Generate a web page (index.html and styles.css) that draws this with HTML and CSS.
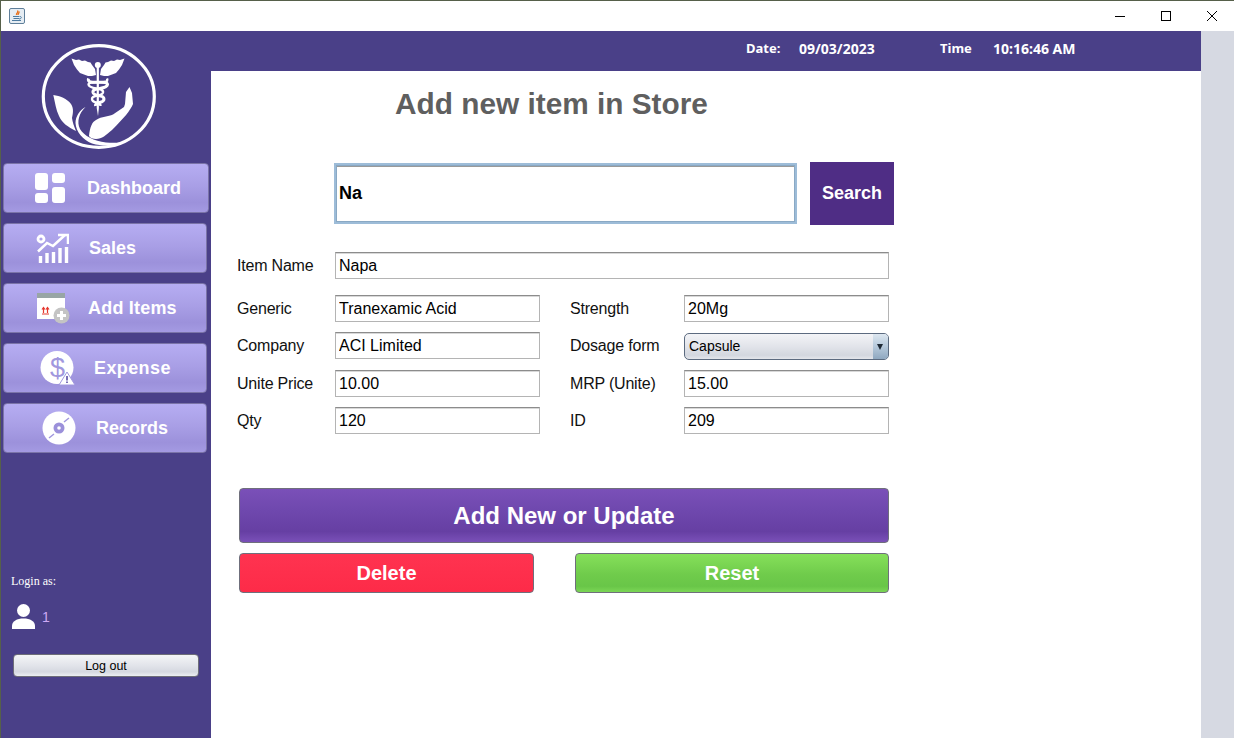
FILE: index.html
```html
<!DOCTYPE html>
<html lang="en">
<head>
<meta charset="utf-8">
<title>Add new item in Store</title>
<link rel="stylesheet" href="styles.css">
</head>
<body>
<div class="window">
  <div class="titlebar">
    <svg class="java-icon" viewBox="0 0 16 16">
      <rect x="0.5" y="0.5" width="15" height="15" rx="1.5" fill="#e6edf3" stroke="#5f7f9a"/>
      <path d="M8.5 2.5C10 4.500 7 5 7.500 7M10 3.500C10.500 5 9 5.500 9 7" fill="none" stroke="#e8701a" stroke-width="1.300"/>
      <path d="M4 8.500H10M4.500 10.500H10M3 12.500H12" stroke="#4d7ba0" stroke-width="1.100"/>
      <path d="M10.500 8.500C13 8 13 11 10 11" fill="none" stroke="#4d7ba0"/>
    </svg>
    <div class="window-buttons">
      <svg viewBox="0 0 12 12"><path d="M1 6.500H11" stroke="#000" fill="none"/></svg>
      <svg viewBox="0 0 12 12"><rect x="1.500" y="1.500" width="9" height="9" stroke="#000" fill="none"/></svg>
      <svg viewBox="0 0 12 12"><path d="M1 1L11 11M11 1L1 11" stroke="#000" fill="none"/></svg>
    </div>
  </div>

  <div class="frame">
    <div class="sidebar">
      <svg class="logo" viewBox="41 44 116 106">
        <ellipse cx="98.800" cy="96.500" rx="55.500" ry="50.800" fill="none" stroke="#fff" stroke-width="3.200"/>
        <g fill="#fff">
          <path d="M71.500 58.500L76 60L79 59.500L82 61L85 60.500L88 62L90.500 62.500L92 65L95 69L96 75L92 76L88 76L84 74.500L80 73L77 69.500L74 65z"/>
          <path d="M124.500 58.500L120 60L117 59.500L114 61L111 60.500L108 62L105.500 62.500L104 65L101 69L100 75L104 76L108 76L112 74.500L116 73L119 69.500L122 65z"/>
          <circle cx="97.800" cy="65" r="3"/>
          <path d="M96.700 66H98.900V108L98 116L96.700 108z"/>
          <path d="M53.300 95C60 96 67 98.500 71 104C74 109 73 113 72 118C72.500 122 74 126 76 131C68 127 62 123 59 116C56 110 55 102 53.300 95z"/>
          <path d="M85.500 107C79 113 76.500 122 80 129C84 136 94 141 106 142.500C113 143 120 143 127 141.500C118 146 104 147 92 143.500C83 140 76 132 75.500 123C75.500 116 80 110 85.500 107z"/>
          <path d="M89 136C90 127 92 122 96 120C102 116 108 117 113 114.500L124 107L125 104L126 92L129.500 87L132 93L133 104C130 111 124 118 112 130C106 135 102 139 96 139C93 139 90 138 89 136z"/>
        </g>
        <path d="M88.500 78.500C86 86 107 79 107.500 84.500C107 90 92 87 93 92.500C94 97 104 94 104 99C104 104 95 101 95.500 106" fill="none" stroke="#fff" stroke-width="3"/>
        <path d="M107 78.500C110 86 89 79 88.500 84.500C89 90 104 87 103 92.500C102 97 92 94 92 99C92 104 101 101 100.500 106" fill="none" stroke="#fff" stroke-width="2.400"/>
      </svg>

      <nav class="nav">
        <a class="nav-item nav-dashboard">
          <svg width="30" height="30" viewBox="0 0 30 30" fill="#fff">
            <rect width="13" height="17" rx="3"/><rect x="17" width="13" height="10" rx="3"/>
            <rect y="20" width="13" height="10" rx="3"/><rect x="17" y="14" width="13" height="16" rx="3"/>
          </svg>
          Dashboard
        </a>
        <a class="nav-item nav-sales">
          <svg width="33" height="30" viewBox="0 0 33 30">
            <circle cx="5" cy="6" r="3" fill="none" stroke="#fff" stroke-width="2.800"/>
            <path d="M2 18.500L11 10L17 13L29 2" fill="none" stroke="#fff" stroke-width="2.500"/>
            <path d="M22 2H32V11" fill="none" stroke="#fff" stroke-width="2.500"/>
            <path d="M4.500 30V23M11 30V20M17.500 30V19M24 30V15M30.500 30V14" stroke="#fff" stroke-width="3.400"/>
          </svg>
          Sales
        </a>
        <a class="nav-item nav-add">
          <svg width="33" height="31" viewBox="0 0 33 31">
            <rect width="28" height="26" fill="#fff"/>
            <rect width="28" height="5" fill="#98a5a5"/>
            <path d="M5 21H12M6.500 20V15M10.500 20V15M5 16.500L6.500 14.500L8 16.500M9 16.500L10.500 14.500L12 16.500" fill="none" stroke="#e5382f" stroke-width="1.200"/>
            <circle cx="24.500" cy="22.500" r="8" fill="#c4c4c4"/>
            <path d="M24.500 18V27M20 22.500H29" stroke="#fff" stroke-width="3"/>
          </svg>
          Add Items
        </a>
        <a class="nav-item nav-expense">
          <svg width="35" height="35" viewBox="0 0 35 35">
            <circle cx="17" cy="16.500" r="16.500" fill="#fff"/>
            <text class="dollar" x="17.500" y="25.500" text-anchor="middle">$</text>
            <path d="M27 21L35 34H19z" fill="#fff" stroke="#a197de"/>
            <path d="M27 25V29.500M27 30.500V32" stroke="#6a5fb0" stroke-width="1.800"/>
          </svg>
          Expense
        </a>
        <a class="nav-item nav-records">
          <svg width="34" height="34" viewBox="0 0 34 34">
            <circle cx="17" cy="17" r="16.500" fill="#fff"/>
            <circle cx="17" cy="17" r="5.500" fill="#9b90da"/>
            <circle cx="17" cy="17" r="1.800" fill="#fff"/>
            <path d="M22 11L27 7M7 27L12 23" stroke="#a197de" stroke-width="1.500"/>
          </svg>
          Records
        </a>
      </nav>

      <div class="login-label">Login as:</div>
      <div class="login-user">
        <svg width="23" height="25" viewBox="0 0 23 25" fill="#fff">
          <circle cx="11.500" cy="6.500" r="6.500"/>
          <path d="M0 25V22C0 17 5 14.500 11.500 14.500C18 14.500 23 17 23 22V25z"/>
        </svg>
        <span class="login-id">1</span>
      </div>
      <button class="logout">Log out</button>
    </div>

    <div class="main">
      <div class="topbar">
        <span class="top-label">Date:</span><span class="top-value date-value">09/03/2023</span>
        <span class="top-label">Time</span><span class="top-value">10:16:46 AM</span>
      </div>

      <div class="content">
        <h1>Add new item in Store</h1>

        <div class="search-row">
          <input class="search-input" type="text" value="Na">
          <button class="search-btn">Search</button>
        </div>

        <div class="name-row">
          <label>Item Name</label>
          <input class="field" type="text" value="Napa">
        </div>

        <div class="fields">
          <label>Generic</label>
          <input class="field" type="text" value="Tranexamic Acid">
          <span></span>
          <label>Strength</label>
          <input class="field" type="text" value="20Mg">

          <label>Company</label>
          <input class="field field-top" type="text" value="ACI Limited">
          <span></span>
          <label>Dosage form</label>
          <div class="combo"><span class="combo-text">Capsule</span><span class="combo-arrow"></span></div>

          <label>Unite Price</label>
          <input class="field" type="text" value="10.00">
          <span></span>
          <label>MRP (Unite)</label>
          <input class="field" type="text" value="15.00">

          <label>Qty</label>
          <input class="field" type="text" value="120">
          <span></span>
          <label>ID</label>
          <input class="field" type="text" value="209">
        </div>

        <div class="actions">
          <button class="btn btn-add">Add New or Update</button>
          <div class="actions-row">
            <button class="btn btn-delete">Delete</button>
            <button class="btn btn-reset">Reset</button>
          </div>
        </div>
      </div>
    </div>

    <div class="sidepanel"></div>
  </div>
</div>
</body>
</html>
```

FILE: styles.css
```css
html, body { margin: 0; padding: 0; height: 100%; overflow: hidden; }
body { font-family: "Liberation Sans", Arial, sans-serif; color: #000; }

.window {
    height: 738px;
    box-sizing: border-box;
    border-top: 1px solid #56604a;
    border-left: 1px solid #56604a;
    display: flex;
    flex-direction: column;
    background: #fff;
}

/* title bar */
.titlebar { height: 30px; display: flex; align-items: center; justify-content: space-between; }
.java-icon { width: 16px; height: 16px; margin-left: 8px; }
.window-buttons { display: flex; gap: 34px; margin-right: 16px; }
.window-buttons svg { width: 12px; height: 12px; }

.frame { flex: 1; display: flex; min-height: 0; }

/* sidebar */
.sidebar {
    width: 210px;
    background: #4a4088;
    box-sizing: border-box;
    padding: 13px 0 0 2px;
    display: flex;
    flex-direction: column;
}
.logo { width: 116px; height: 106px; margin-left: 38px; }
.nav { margin-top: 13px; display: flex; flex-direction: column; gap: 10px; }
.nav-item {
    width: 204px;
    height: 50px;
    box-sizing: border-box;
    display: flex;
    align-items: center;
    border: 1px solid #7b74a8;
    border-radius: 4px;
    background: linear-gradient(#b6adf2 0%, #a99fe6 45%, #9c91db 80%, #a49ae2 100%);
    color: #fff;
    font-size: 18px;
    font-weight: bold;
}
.nav-dashboard { width: 206px; padding-left: 31px; gap: 22px; }
.nav-sales { padding-left: 32px; gap: 20px; }
.nav-add { padding-left: 33px; gap: 18px; letter-spacing: 0.2px; }
.nav-expense { padding-left: 36px; gap: 19px; letter-spacing: 0.4px; }
.nav-records { padding-left: 38px; gap: 20px; }
.dollar { font-family: "Liberation Sans", sans-serif; font-size: 27px; font-weight: normal; letter-spacing: 0; fill: #a197de; }

.login-label {
    margin: 121px 0 0 8px;
    font-family: "Liberation Serif", serif;
    font-size: 12px;
    line-height: 14px;
    color: #fff;
}
.login-user { margin: 16px 0 0 9px; display: flex; align-items: center; gap: 7px; }
.login-id { font-size: 14px; color: #cda9f5; }
.logout {
    width: 186px;
    height: 23px;
    margin: 25px 0 0 10px;
    padding: 0;
    border: 1px solid #6d6d78;
    border-radius: 4px;
    background: linear-gradient(#f4f5f7 0%, #e2e4ea 50%, #d5d8e0 80%, #eceef2 100%);
    font-family: inherit;
    font-size: 12.500px;
    color: #000;
}

/* main column */
.main { width: 990px; display: flex; flex-direction: column; }
.topbar {
    height: 40px;
    flex: none;
    background: #4a4088;
    color: #fff;
    font-family: "Noto Sans", sans-serif;
    font-size: 13px;
    font-weight: bold;
    display: flex;
    align-items: center;
    padding-left: 535px;
    padding-bottom: 6px;
    box-sizing: border-box;
}
.top-label { width: 53px; }
.top-value { font-size: 14px; }
.date-value { width: 141px; }

.content { padding-left: 26px; }
h1 {
    margin: 16px 0 0 158px;
    font-size: 29.800px;
    line-height: 34px;
    font-weight: bold;
    color: #5f5f5f;
}

.search-row { margin: 41px 0 0 97px; display: flex; align-items: center; gap: 13px; width: 560px; }
.search-input {
    width: 463px;
    height: 61px;
    box-sizing: border-box;
    padding: 0 3px;
    border: 2px solid #9dbcd8;
    outline: none;
    box-shadow: inset 0 0 0 1px #8aa9c4, inset 0 2px 0 #9a9a9a;
    font-family: inherit;
    font-size: 18px;
    font-weight: bold;
    color: #000;
}
.search-btn {
    width: 84px;
    height: 63px;
    padding: 0;
    border: 0;
    background: #4f2d85;
    color: #fff;
    font-family: inherit;
    font-size: 18px;
    font-weight: bold;
}

label { font-size: 16px; letter-spacing: -0.2px; color: #111; }
.field {
    box-sizing: border-box;
    width: 100%;
    height: 27px;
    padding: 1px 3px 0;
    border: 1px solid #b4b4b4;
    border-top-color: #8c8c8c;
    border-radius: 0;
    outline: none;
    box-shadow: inset 0 1px 0 #d8d8d8;
    font-family: inherit;
    font-size: 16px;
    color: #000;
}

.name-row {
    margin: 27px 0 0 0;
    width: 652px;
    display: grid;
    grid-template-columns: 98px 554px;
    align-items: center;
}
.fields {
    margin-top: 16px;
    width: 652px;
    display: grid;
    grid-template-columns: 98px 205px 30px 114px 205px;
    grid-template-rows: 27px 28px 27px 27px;
    row-gap: 10px;
    align-items: center;
}
.field-top { align-self: start; }

.combo {
    height: 27px;
    align-self: end;
    box-sizing: border-box;
    display: flex;
    border: 1px solid #5c6b80;
    border-radius: 5px;
    overflow: hidden;
    background: linear-gradient(#f3f4f7 0%, #e2e4ea 50%, #d3d7df 85%, #e4e6eb 100%);
}
.combo-text { flex: 1; padding-left: 4px; font-size: 14px; line-height: 25px; }
.combo-arrow {
    width: 15px;
    position: relative;
    background: linear-gradient(#dde7f0 0%, #b6c9db 50%, #8fa8c0 100%);
}
.combo-arrow:after {
    content: "";
    position: absolute;
    left: 4px;
    top: 10px;
    border-top: 6px solid #1f2a36;
    border-left: 3.500px solid transparent;
    border-right: 3.500px solid transparent;
}

.actions { margin: 54px 0 0 2px; width: 650px; display: flex; flex-direction: column; gap: 10px; }
.actions-row { display: flex; justify-content: space-between; }
.btn {
    padding: 0;
    border: 1px solid #6f6f7c;
    border-radius: 4px;
    color: #fff;
    font-family: inherit;
    font-weight: bold;
}
.btn-add {
    height: 55px;
    font-size: 24px;
    background: linear-gradient(#7a50b8 0%, #6f48ae 40%, #663fa3 80%, #7a50b8 100%);
}
.btn-delete {
    width: 295px;
    height: 40px;
    font-size: 20px;
    background: linear-gradient(#ff3350, #fd2b48);
}
.btn-reset {
    width: 314px;
    height: 40px;
    font-size: 20px;
    background: linear-gradient(#86e05a 0%, #6fcb4b 55%, #69c648 85%, #7bd655 100%);
}

.sidepanel { flex: 1; background: #d6d9e2; }
```
